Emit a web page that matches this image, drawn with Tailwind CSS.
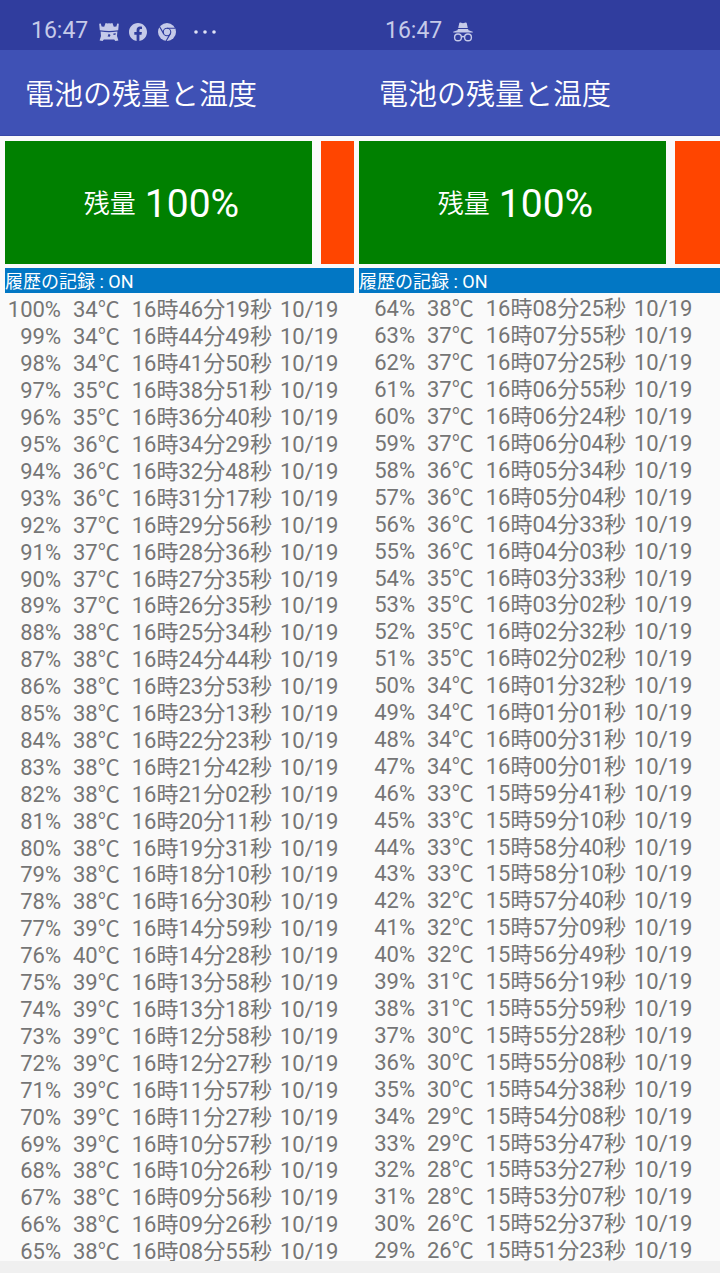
<!DOCTYPE html>
<html lang="ja">
<head>
  <meta charset="UTF-8" />
  <meta name="viewport" content="width=device-width, initial-scale=1" />
  <title>電池の残量と温度</title>
  <script src="https://cdn.jsdelivr.net/npm/@tailwindcss/browser@4"></script>
</head>
<body class="h-screen flex bg-[#fafafa] overflow-hidden font-[Roboto,'Noto_Sans_CJK_JP',sans-serif]">

  <!-- First screen -->
  <section class="w-[354px] shrink-0 h-full flex flex-col">

    <!-- Status bar -->
    <div class="h-[50px] shrink-0 bg-[#303d9e] text-[#c5cae9] flex items-center pt-[13px] pl-[31px]">
      <span class="text-[23px]">16:47</span>
      <svg class="w-5 h-5 ml-[11px]" viewBox="0 0 20 20" fill="currentColor" aria-hidden="true">
        <path d="M.2 1.8 1.8 1.6 2.6 4.6 5.2 4.8 6.6.9 8.5 1.5 10 1.2 11.5 1.5 13.4.9 14.8 4.8 17.4 4.6 18.2 1.6l1.6.2-.6 6.4Q10 9.6.8 8.2z"/>
        <path fill-rule="evenodd" d="M1.6 9.5Q10 11 18.4 9.5L18 14l1.4 4.6-3 .3-1.2-1.4H4.8L3.6 18.9l-3-.3L2 14zM9.7 11.8l1.8 1.2-.7 1.8-2.2-.3zM14.4 11.5l2.4-.3-.3 1.5-2 .2z"/>
      </svg>
      <svg class="w-[18px] h-[18px] ml-[10px]" viewBox="0 0 24 24" fill="currentColor" aria-hidden="true">
        <path d="M24 12.07C24 5.4 18.63 0 12 0S0 5.4 0 12.07C0 18.1 4.39 23.1 10.13 24v-8.44H7.08v-3.49h3.05V9.41c0-3.02 1.79-4.69 4.53-4.69 1.31 0 2.68.24 2.68.24v2.97h-1.51c-1.49 0-1.96.93-1.96 1.89v2.25h3.33l-.53 3.49h-2.8V24C19.61 23.1 24 18.1 24 12.07z"/>
      </svg>
      <svg class="w-[18px] h-[18px] ml-[11px]" viewBox="0 0 24 24" aria-hidden="true">
        <circle cx="12" cy="12" r="12" fill="#c5cae9"/>
        <g fill="none" stroke="#303d9e" stroke-width="1.5">
          <circle cx="12" cy="12" r="5"/>
          <path d="M12 7h11M7.7 14.5 2.2 5M16.3 14.5 10.8 24"/>
        </g>
      </svg>
      <svg class="w-[22px] h-1 ml-[18px]" viewBox="0 0 22 4" fill="#dfe2f5" aria-hidden="true">
        <circle cx="2" cy="2" r="1.8"/>
        <circle cx="11" cy="2" r="1.8"/>
        <circle cx="20" cy="2" r="1.8"/>
      </svg>
    </div>

    <!-- App bar -->
    <header class="h-[86px] shrink-0 bg-[#3f51b5] flex items-center pl-[25px] pt-[6px] border-b border-[#3848a8]">
      <h1 class="text-[29px] font-[350] text-white">電池の残量と温度</h1>
    </header>

    <!-- Tiles -->
    <div class="h-[132px] shrink-0 flex gap-[9px] pl-[5px] pt-[5px] pb-1">
      <div class="w-[307px] shrink-0 bg-[#008000] text-white flex items-center justify-center gap-[9px] pt-1 pl-[6px]">
        <span class="text-[26px] font-[350]">残量</span>
        <span class="text-[39px]">100%</span>
      </div>
      <div class="grow bg-[#ff4500]"></div>
    </div>

    <button type="button" class="h-[25px] shrink-0 ml-[5px] bg-[#0277c4] text-white text-[18px] leading-[25px] pt-px text-left">履歴の記録 : ON</button>

    <div class="flex-1 min-h-0 overflow-y-auto [scrollbar-width:none]">
      <table class="mt-1 h-[969px] text-[22px] leading-[26px] text-[#757575] whitespace-nowrap">
        <tbody id="log1"></tbody>
      </table>
    </div>
    <div class="h-3 shrink-0 bg-[#f0f0f0]"></div>
  </section>

  <!-- Second screen, scrolled further down the log -->
  <section class="flex-1 min-w-0 h-full flex flex-col">

    <!-- Status bar -->
    <div class="h-[50px] shrink-0 bg-[#303d9e] text-[#c5cae9] flex items-center pt-[13px] pl-[31px]">
      <span class="text-[23px]">16:47</span>
      <svg class="w-5 h-5 ml-[11px]" viewBox="0 0 20 20" aria-hidden="true">
        <path fill="currentColor" d="M6.3 1Q6.6.4 7.3.6L10 1.2 12.7.6q.7-.2 1 .4L14.8 6H5.2zM4.9 7h10.2l.4 1.2 4.3 1.6v.7H.2v-.7l4.3-1.6z"/>
        <g fill="none" stroke="currentColor" stroke-width="1.4">
          <circle cx="5" cy="15.4" r="3.4"/>
          <circle cx="15" cy="15.4" r="3.4"/>
          <path d="M8.4 15q1.6-1 3.2 0"/>
        </g>
      </svg>
    </div>

    <!-- App bar -->
    <header class="h-[86px] shrink-0 bg-[#3f51b5] flex items-center pl-[25px] pt-[6px] border-b border-[#3848a8]">
      <h2 class="text-[29px] font-[350] text-white">電池の残量と温度</h2>
    </header>

    <!-- Tiles -->
    <div class="h-[132px] shrink-0 flex gap-[9px] pl-[5px] pt-[5px] pb-1">
      <div class="w-[307px] shrink-0 bg-[#008000] text-white flex items-center justify-center gap-[9px] pt-1 pl-[6px]">
        <span class="text-[26px] font-[350]">残量</span>
        <span class="text-[39px]">100%</span>
      </div>
      <div class="grow bg-[#ff4500]"></div>
    </div>

    <button type="button" class="h-[25px] shrink-0 ml-[5px] bg-[#0277c4] text-white text-[18px] leading-[25px] pt-px text-left">履歴の記録 : ON</button>

    <div class="flex-1 min-h-0 overflow-y-auto [scrollbar-width:none]">
      <table class="mt-[3px] h-[969px] text-[22px] leading-[26px] text-[#757575] whitespace-nowrap">
        <tbody id="log2"></tbody>
      </table>
    </div>
    <div class="h-3 shrink-0 bg-[#f0f0f0]"></div>
  </section>

  <script>
    // temperature and time, one entry per percent going down
    const first = [
      '34 16:46:19', '34 16:44:49', '34 16:41:50', '35 16:38:51', '35 16:36:40', '36 16:34:29',
      '36 16:32:48', '36 16:31:17', '37 16:29:56', '37 16:28:36', '37 16:27:35', '37 16:26:35',
      '38 16:25:34', '38 16:24:44', '38 16:23:53', '38 16:23:13', '38 16:22:23', '38 16:21:42',
      '38 16:21:02', '38 16:20:11', '38 16:19:31', '38 16:18:10', '38 16:16:30', '39 16:14:59',
      '40 16:14:28', '39 16:13:58', '39 16:13:18', '39 16:12:58', '39 16:12:27', '39 16:11:57',
      '39 16:11:27', '39 16:10:57', '38 16:10:26', '38 16:09:56', '38 16:09:26', '38 16:08:55'
    ];
    const second = [
      '38 16:08:25', '37 16:07:55', '37 16:07:25', '37 16:06:55', '37 16:06:24', '37 16:06:04',
      '36 16:05:34', '36 16:05:04', '36 16:04:33', '36 16:04:03', '35 16:03:33', '35 16:03:02',
      '35 16:02:32', '35 16:02:02', '34 16:01:32', '34 16:01:01', '34 16:00:31', '34 16:00:01',
      '33 15:59:41', '33 15:59:10', '33 15:58:40', '33 15:58:10', '32 15:57:40', '32 15:57:09',
      '32 15:56:49', '31 15:56:19', '31 15:55:59', '30 15:55:28', '30 15:55:08', '30 15:54:38',
      '29 15:54:08', '29 15:53:47', '28 15:53:27', '28 15:53:07', '26 15:52:37', '26 15:51:23'
    ];

    function fillLog(id, start, entries) {
      document.getElementById(id).innerHTML = entries.map((entry, i) => {
        const [temp, time] = entry.split(' ');
        const [h, m, s] = time.split(':');
        return `<tr>
          <td class="w-[61px] p-0 text-right">${start - i}%</td>
          <td class="p-0 pl-3">${temp}℃</td>
          <td class="p-0 pl-3">${h}時${m}分${s}秒</td>
          <td class="p-0 pl-2">10/19</td>
        </tr>`;
      }).join('');
    }

    fillLog('log1', 100, first);
    fillLog('log2', 64, second);
  </script>
</body>
</html>
